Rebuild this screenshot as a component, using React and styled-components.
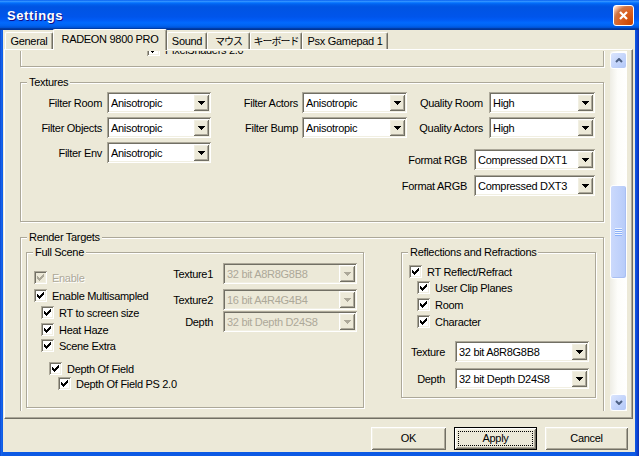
import React, { useLayoutEffect, useRef } from "react";
import styled, { createGlobalStyle } from "styled-components";

const GlobalStyle = createGlobalStyle`
  * { box-sizing: border-box; }
  html, body { margin: 0; padding: 0; background: #ffffff; }
  body {
    font-family: "Liberation Sans", "Noto Sans CJK JP", sans-serif;
    font-size: 11px;
    letter-spacing: -0.3px;
    color: #000000;
  }
`;

// classic 3d edges
const raised = `inset 1px 1px #ffffff, inset -1px -1px #716F64, inset 2px 2px #F1EFE2, inset -2px -2px #ACA899`;
const sunken = `inset 1px 1px #ACA899, inset -1px -1px #ffffff, inset 2px 2px #716F64, inset -2px -2px #F1EFE2`;

const tabs = [
  { label: "General", w: 48 },
  { label: "RADEON 9800 PRO", w: 114, active: true },
  { label: "Sound", w: 40 },
  { label: "マウス", w: 43, jp: true },
  { label: "キーボード", w: 52, jp: true },
  { label: "Psx Gamepad 1", w: 86 },
];

const CheckMark = ({ color }) => (
  <svg width="7" height="7" viewBox="0 0 7 7" shapeRendering="crispEdges">
    <path
      fill={color}
      d="M6 0h1v1h-1z M5 1h2v1h-2z M0 2h1v1h-1z M4 2h3v1h-3z M0 3h2v1h-2z M3 3h3v1h-3z M0 4h5v1h-5z M1 5h3v1h-3z M2 6h1v1h-1z"
    />
  </svg>
);

const Check = ({ label, indent = 0, mt = 0, disabled }) => (
  <CheckRow $indent={indent} $mt={mt}>
    <Box $disabled={disabled}>
      <CheckMark color={disabled ? "#ACA899" : "#000000"} />
    </Box>
    <CheckLabel $disabled={disabled}>{label}</CheckLabel>
  </CheckRow>
);

const Combo = ({ value, width, disabled }) => (
  <ComboBox $w={width} $disabled={disabled}>
    <ComboValue>{value}</ComboValue>
    <DropButton>
      <svg width="7" height="4" viewBox="0 0 7 4" shapeRendering="crispEdges">
        <path d="M0 0h7v1h-7z M1 1h5v1h-5z M2 2h3v1h-3z M3 3h1v1h-1z" fill={disabled ? "#ACA899" : "#000"} />
      </svg>
    </DropButton>
  </ComboBox>
);

const Field = ({ label, value, width, gap, mt = 0, disabled }) => (
  <FieldRow $mt={mt}>
    <FieldLabel $gap={gap}>{label}</FieldLabel>
    <Combo value={value} width={width} disabled={disabled} />
  </FieldRow>
);

const Chevron = ({ down }) => (
  <svg width="8" height="5" viewBox="0 0 8 5">
    <path
      d={down ? "M1 1 L4 4 L7 1" : "M1 4 L4 1 L7 4"}
      fill="none"
      stroke="#4D6185"
      strokeWidth="2"
    />
  </svg>
);

const App = () => {
  const viewRef = useRef(null);
  const texRef = useRef(null);

  useLayoutEffect(() => {
    if (viewRef.current && texRef.current) {
      viewRef.current.scrollTop = texRef.current.offsetTop - 25;
    }
  }, []);

  return (
    <>
      <GlobalStyle />
      <Window>
        <TitleBar>
          <Title>Settings</Title>
          <CloseButton>
            <svg width="11" height="11" viewBox="0 0 11 11">
              <path d="M2 2 L9 9 M9 2 L2 9" stroke="#fff" strokeWidth="2.2" />
            </svg>
          </CloseButton>
        </TitleBar>
        <Body>
          <TabStrip>
            {tabs.map((t) => (
              <Tab key={t.label} $w={t.w} $active={t.active} $jp={t.jp}>
                {t.label}
              </Tab>
            ))}
          </TabStrip>
          <TabPanel>
            <ScrollArea>
              <Viewport ref={viewRef}>
                <Content>
                  {/* group scrolled mostly out of view */}
                  <Group>
                    <ShaderRows>
                      <Check label="PixelShaders 2.0" indent={126} />
                    </ShaderRows>
                  </Group>

                  <Group ref={texRef}>
                    <Legend>Textures</Legend>
                    <TexturesBody>
                      <Column $w={190}>
                        <Field label="Filter Room" value="Anisotropic" width={104} gap={5} />
                        <Field label="Filter Objects" value="Anisotropic" width={104} gap={5} mt={4} />
                        <Field label="Filter Env" value="Anisotropic" width={104} gap={5} mt={4} />
                      </Column>
                      <Column $w={196}>
                        <Field label="Filter Actors" value="Anisotropic" width={105} gap={4} />
                        <Field label="Filter Bump" value="Anisotropic" width={105} gap={4} mt={4} />
                      </Column>
                      <Column $grow>
                        <Field label="Quality Room" value="High" width={106} gap={6} />
                        <Field label="Quality Actors" value="High" width={106} gap={6} mt={4} />
                        <Field label="Format RGB" value="Compressed DXT1" width={121} gap={7} mt={11} />
                        <Field label="Format ARGB" value="Compressed DXT3" width={121} gap={7} mt={5} />
                      </Column>
                    </TexturesBody>
                  </Group>

                  <Group>
                    <Legend>Render Targets</Legend>
                    <TargetsBody>
                      <SubGroup $w={338}>
                        <Legend>Full Scene</Legend>
                        <FullSceneBody>
                          <CheckColumn>
                            <Check label="Enable" indent={7} disabled />
                            <Check label="Enable Multisampled" indent={7} mt={1} />
                            <Check label="RT to screen size" indent={14} />
                            <Check label="Heat Haze" indent={14} />
                            <Check label="Scene Extra" indent={14} mt={-1} />
                            <Check label="Depth Of Field" indent={22} mt={6} />
                            <Check label="Depth Of Field PS 2.0" indent={31} mt={-2} />
                          </CheckColumn>
                          <ComboColumn>
                            <Field label="Texture1" value="32 bit A8R8G8B8" width={134} gap={10} mt={4} disabled />
                            <Field label="Texture2" value="16 bit A4R4G4B4" width={134} gap={10} mt={5} disabled />
                            <Field label="Depth" value="32 bit Depth D24S8" width={134} gap={10} mt={1} disabled />
                          </ComboColumn>
                        </FullSceneBody>
                      </SubGroup>
                      <SubGroup $w={195}>
                        <Legend>Reflections and Refractions</Legend>
                        <ReflectBody>
                          <Check label="RT Reflect/Refract" indent={7} mt={4} />
                          <Check label="User Clip Planes" indent={15} mt={-1} />
                          <Check label="Room" indent={15} />
                          <Check label="Character" indent={15} />
                          <Field label="Texture" value="32 bit A8R8G8B8" width={134} gap={10} mt={11} />
                          <Field label="Depth" value="32 bit Depth D24S8" width={134} gap={10} mt={6} />
                        </ReflectBody>
                      </SubGroup>
                    </TargetsBody>
                  </Group>
                </Content>
              </Viewport>
              <Scrollbar>
                <ScrollButton>
                  <Chevron />
                </ScrollButton>
                <Track>
                  <Thumb $offset={116} $size={94}>
                    <svg width="7" height="8" viewBox="0 0 7 8" shapeRendering="crispEdges">
                      <path d="M0 0h7v1h-7z M0 2h7v1h-7z M0 4h7v1h-7z M0 6h7v1h-7z" fill="#EEF4FE" />
                      <path d="M0 1h7v1h-7z M0 3h7v1h-7z M0 5h7v1h-7z M0 7h7v1h-7z" fill="#8CB0F8" />
                    </svg>
                  </Thumb>
                </Track>
                <ScrollButton>
                  <Chevron down />
                </ScrollButton>
              </Scrollbar>
            </ScrollArea>
          </TabPanel>
          <Footer>
            <Button $w={75}>OK</Button>
            <Button $w={83} $default>
              <FocusRing>Apply</FocusRing>
            </Button>
            <Button $w={83}>Cancel</Button>
          </Footer>
        </Body>
      </Window>
    </>
  );
};

const Window = styled.div`
  width: 639px;
  height: 456px;
  display: flex;
  flex-direction: column;
  overflow: hidden;
  background: linear-gradient(
    to right,
    #0a3ac6 0px,
    #1767ec 1px,
    #0d5ae4 3px,
    #0d5ae4 calc(100% - 4px),
    #0b45d6 calc(100% - 2px),
    #0a2fb0 100%
  );
`;

const TitleBar = styled.div`
  height: 30px;
  flex: none;
  display: flex;
  align-items: center;
  justify-content: space-between;
  padding: 0 5px 0 7px;
  background: linear-gradient(
    to bottom,
    #0058ee 0%,
    #3593ff 4%,
    #288eff 6%,
    #127dff 8%,
    #036ffc 10%,
    #0262ee 14%,
    #0057e5 20%,
    #0054e3 24%,
    #0055eb 56%,
    #005bf5 66%,
    #026afe 76%,
    #0062ef 86%,
    #0052d6 92%,
    #0040ab 94%,
    #003092 100%
  );
`;

const Title = styled.span`
  color: #ffffff;
  font-weight: bold;
  font-size: 13px;
  letter-spacing: 0.6px;
  text-shadow: 1px 1px #0f1089;
  margin-top: 1px;
`;

const CloseButton = styled.div`
  width: 21px;
  height: 21px;
  display: flex;
  align-items: center;
  justify-content: center;
  border: 1px solid #ffffff;
  border-radius: 3px;
  background: radial-gradient(circle at 90% 90%, #cc4600 0%, #dc6527 55%, #cd7546 70%, #ffccb2 90%, #ffffff 100%);
`;

const Body = styled.div`
  flex: 1;
  min-height: 0;
  margin: 0 4px 4px 3px;
  background: #ece9d8;
  display: flex;
  flex-direction: column;
`;

const TabStrip = styled.div`
  height: 19px;
  flex: none;
  display: flex;
  align-items: flex-end;
  padding-left: 2px;
`;

const Tab = styled.div`
  position: relative;
  z-index: ${(p) => (p.$active ? 2 : 1)};
  width: ${(p) => p.$w}px;
  flex: none;
  height: ${(p) => (p.$active ? 21 : 17)}px;
  margin-bottom: ${(p) => (p.$active ? -1 : 0)}px;
  padding-bottom: ${(p) => (p.$active ? 2 : 0)}px;
  display: flex;
  align-items: center;
  justify-content: center;
  white-space: nowrap;
  line-height: 11px;
  background: #ece9d8;
  border-top: 1px solid #ffffff;
  border-left: 1px solid #ffffff;
  border-right: 1px solid #716f64;
  box-shadow: inset -1px 0 #aca899;
  border-radius: 2px 2px 0 0;
  font-size: ${(p) => (p.$jp ? "10px" : "11px")};
  letter-spacing: ${(p) => (p.$jp ? "-1px" : "-0.3px")};
`;

const TabPanel = styled.div`
  height: 370px;
  flex: none;
  margin: 0 2px 0 1px;
  border: 1px solid;
  border-color: #ffffff #716f64 #716f64 #ffffff;
  box-shadow: inset -1px -1px #aca899;
  padding: 1px 5px 7px 0;
  display: flex;
`;

const ScrollArea = styled.div`
  flex: 1;
  display: flex;
  min-width: 0;
`;

const Viewport = styled.div`
  flex: 1;
  min-width: 0;
  overflow: hidden;
`;

const Content = styled.div`
  position: relative;
  display: flex;
  flex-direction: column;
  gap: 9px;
  padding: 0 6px 80px 15px;
`;

const Group = styled.fieldset`
  margin: 0;
  padding: 0;
  min-width: 0;
  border: 1px solid #aca899;
  box-shadow: inset 1px 1px #ffffff, 1px 1px #ffffff;
`;

const SubGroup = styled(Group)`
  width: ${(p) => p.$w}px;
  flex: none;
  overflow: hidden;
`;

const Legend = styled.legend`
  margin-left: 6px;
  padding: 0 2px;
  line-height: 13px;
  background: #ece9d8;
`;

const ShaderRows = styled.div`
  display: flex;
  flex-direction: column;
  padding: 4px 0 8px;
`;

const TexturesBody = styled.div`
  display: flex;
  align-items: flex-start;
  padding: 3px 8px 25px 0;
`;

const Column = styled.div`
  display: flex;
  flex-direction: column;
  width: ${(p) => (p.$w ? `${p.$w}px` : "auto")};
  flex: ${(p) => (p.$grow ? "1 1 0" : "none")};
  min-width: 0;
`;

const FieldRow = styled.div`
  display: flex;
  align-items: center;
  justify-content: flex-end;
  margin-top: ${(p) => p.$mt}px;
`;

const FieldLabel = styled.span`
  margin-right: ${(p) => p.$gap}px;
  white-space: nowrap;
`;

const ComboBox = styled.div`
  width: ${(p) => p.$w}px;
  height: 21px;
  flex: none;
  display: flex;
  align-items: center;
  padding: 2px 2px 2px 4px;
  background: ${(p) => (p.$disabled ? "#ece9d8" : "#ffffff")};
  color: ${(p) => (p.$disabled ? "#aca899" : "#000000")};
  box-shadow: ${sunken};
`;

const ComboValue = styled.span`
  flex: 1;
  white-space: nowrap;
  overflow: hidden;
`;

const DropButton = styled.span`
  width: 16px;
  height: 17px;
  flex: none;
  display: flex;
  align-items: center;
  justify-content: center;
  background: #ece9d8;
  box-shadow: ${raised};
`;

const TargetsBody = styled.div`
  display: flex;
  align-items: flex-start;
  justify-content: space-between;
  padding: 2px 7px 24px 5px;
`;

const FullSceneBody = styled.div`
  display: flex;
  align-items: flex-start;
  padding-right: 6px;
`;

const CheckColumn = styled.div`
  flex: 1 1 0;
  min-width: 0;
  display: flex;
  flex-direction: column;
  padding: 10px 0 15px;
`;

const ComboColumn = styled.div`
  flex: none;
  display: flex;
  flex-direction: column;
`;

const ReflectBody = styled.div`
  display: flex;
  flex-direction: column;
  padding: 0 6px 8px 0;
`;

const CheckRow = styled.div`
  height: 17px;
  display: flex;
  align-items: center;
  padding-left: ${(p) => p.$indent}px;
  margin-top: ${(p) => p.$mt}px;
  white-space: nowrap;
`;

const Box = styled.span`
  width: 13px;
  height: 13px;
  flex: none;
  display: inline-flex;
  align-items: center;
  justify-content: center;
  background: ${(p) => (p.$disabled ? "#ece9d8" : "#ffffff")};
  box-shadow: ${sunken};
`;

const CheckLabel = styled.span`
  margin-left: 5px;
  color: ${(p) => (p.$disabled ? "#aca899" : "#000000")};
  text-shadow: ${(p) => (p.$disabled ? "1px 1px #ffffff" : "none")};
`;

const Scrollbar = styled.div`
  width: 17px;
  flex: none;
  display: flex;
  flex-direction: column;
  padding-top: 1px;
  background: linear-gradient(to right, #eeede5, #fdfdfa 45%, #ffffff);
`;

const ScrollButton = styled.div`
  height: 17px;
  flex: none;
  display: flex;
  align-items: center;
  justify-content: center;
  border: 1px solid #ffffff;
  border-radius: 3px;
  background: linear-gradient(135deg, #dbe5fd, #c3d4fb 55%, #b3c8f7);
`;

const Track = styled.div`
  flex: 1;
  display: flex;
  flex-direction: column;
`;

const Thumb = styled.div`
  margin-top: ${(p) => p.$offset}px;
  height: ${(p) => p.$size}px;
  display: flex;
  align-items: center;
  justify-content: center;
  border: 1px solid #ffffff;
  border-radius: 3px;
  box-shadow: inset -1px -1px #a9bff3;
  background: linear-gradient(to right, #cbd9fc, #bfd1fb 60%, #b6cbf8);
`;

const Footer = styled.div`
  flex: 1;
  display: flex;
  justify-content: flex-end;
  align-items: flex-start;
  gap: 8px;
  padding: 8px 7px 0 0;
`;

const Button = styled.button`
  width: ${(p) => p.$w}px;
  height: 23px;
  padding: 3px;
  margin: 0;
  display: flex;
  align-items: center;
  justify-content: center;
  font: inherit;
  letter-spacing: inherit;
  color: #000000;
  background: #ece9d8;
  border: ${(p) => (p.$default ? "1px solid #000000" : "none")};
  box-shadow: ${raised};
  line-height: 15px;
`;

const FocusRing = styled.span`
  align-self: stretch;
  flex: 1;
  display: flex;
  align-items: center;
  justify-content: center;
  border: 1px dotted #000000;
`;

export default App;
